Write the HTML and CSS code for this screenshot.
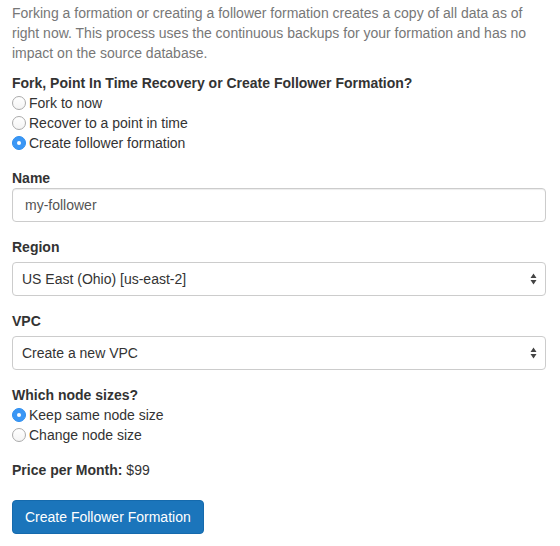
FILE: index.html
```html
<!DOCTYPE html>
<html>
<head>
<meta charset="utf-8">
<link rel="stylesheet" href="styles.css">
</head>
<body>
<form class="form">
  <p class="intro">Forking a formation or creating a follower formation creates a copy of all data as of right now. This process uses the continuous backups for your formation and has no impact on the source database.</p>

  <div class="group">
    <div class="label">Fork, Point In Time Recovery or Create Follower Formation?</div>
    <label class="radio"><span class="dot"></span>Fork to now</label>
    <label class="radio"><span class="dot"></span>Recover to a point in time</label>
    <label class="radio"><span class="dot on"></span>Create follower formation</label>
  </div>

  <div class="group">
    <div class="label">Name</div>
    <div class="input">my-follower</div>
  </div>

  <div class="group">
    <div class="label label-gap">Region</div>
    <div class="select"><span>US East (Ohio) [us-east-2]</span>
      <svg class="arrows" width="7" height="12" viewBox="0 0 7 12"><path d="M3.5 0.5 L6.5 5 L0.5 5 Z M3.5 11.5 L6.5 7 L0.5 7 Z" fill="#444"/></svg>
    </div>
  </div>

  <div class="group">
    <div class="label label-gap">VPC</div>
    <div class="select"><span>Create a new VPC</span>
      <svg class="arrows" width="7" height="12" viewBox="0 0 7 12"><path d="M3.5 0.5 L6.5 5 L0.5 5 Z M3.5 11.5 L6.5 7 L0.5 7 Z" fill="#444"/></svg>
    </div>
  </div>

  <div class="group">
    <div class="label">Which node sizes?</div>
    <label class="radio"><span class="dot on"></span>Keep same node size</label>
    <label class="radio"><span class="dot"></span>Change node size</label>
  </div>

  <div class="price"><b>Price per Month:</b> $99</div>

  <div class="actions"><button type="button" class="btn">Create Follower Formation</button></div>
</form>
</body>
</html>
```

FILE: styles.css
```css
html, body {
  margin: 0;
  padding: 0;
  background: #fff;
}
body {
  font-family: "Liberation Sans", Arial, Helvetica, sans-serif;
  font-size: 14px;
  line-height: 20px;
  color: #333;
}
.form {
  width: 534px;
  padding: 3px 0 0 12px;
}
.intro {
  margin: 0 0 10px;
  color: #777;
}
.group {
  margin-bottom: 15px;
}
.label {
  font-weight: bold;
  color: #333;
}
.label-gap {
  margin-bottom: 5px;
}
.radio {
  display: flex;
  align-items: center;
  height: 20px;
}
.dot {
  box-sizing: border-box;
  width: 14px;
  height: 14px;
  border-radius: 50%;
  border: 1px solid #ababab;
  background: linear-gradient(#fff, #f4f4f4);
  margin-right: 3px;
  position: relative;
  flex: none;
}
.dot.on {
  border-color: #2c8ef0;
  background: #3b97f5;
}
.dot.on::after {
  content: "";
  position: absolute;
  left: 4px;
  top: 4px;
  width: 4px;
  height: 4px;
  border-radius: 50%;
  background: #fff;
}
.input {
  box-sizing: border-box;
  height: 34px;
  border: 1px solid #ccc;
  border-radius: 4px;
  padding: 6px 12px;
  color: #555;
  box-shadow: inset 0 1px 1px rgba(0,0,0,0.075);
}
.select {
  box-sizing: border-box;
  height: 34px;
  border: 1px solid #ccc;
  border-radius: 4px;
  padding: 6px 8px 6px 9px;
  color: #333;
  display: flex;
  align-items: center;
  justify-content: space-between;
  background: #fff;
}
.arrows {
  display: block;
}
.price {
  margin-bottom: 20px;
}
.price b {
  font-weight: bold;
}
.btn {
  font-family: "Liberation Sans", Arial, Helvetica, sans-serif;
  font-size: 14px;
  line-height: 20px;
  height: 34px;
  padding: 6px 12px;
  color: #fff;
  background: #1b75bb;
  border: 1px solid #156aad;
  border-radius: 4px;
  cursor: pointer;
}
```
